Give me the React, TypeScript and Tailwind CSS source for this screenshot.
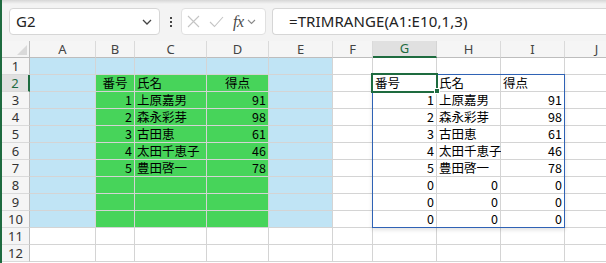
import React from "react";

const COLS = ["A", "B", "C", "D", "E", "F", "G", "H", "I", "J"];

type Cell = { t?: string; a?: "l" | "r" | "c"; bg?: string };

const BLUE = "bg-[#c0e4f5]";
const GREEN = "bg-[#47d45a]";

function buildRows(): Cell[][] {
  const rows: Cell[][] = [];
  const names = ["上原嘉男", "森永彩芽", "古田恵", "太田千恵子", "豊田啓一"];
  const scores = ["91", "98", "61", "46", "78"];
  for (let r = 1; r <= 12; r++) {
    const row: Cell[] = COLS.map(() => ({}));
    if (r <= 10) {
      for (let c = 0; c < 5; c++) row[c].bg = BLUE;
    }
    if (r >= 2 && r <= 10) {
      for (let c = 1; c < 4; c++) row[c].bg = GREEN;
    }
    if (r === 2) {
      row[1] = { ...row[1], t: "番号", a: "c" };
      row[2] = { ...row[2], t: "氏名", a: "l" };
      row[3] = { ...row[3], t: "得点", a: "c" };
      row[6] = { t: "番号", a: "l" };
      row[7] = { t: "氏名", a: "l" };
      row[8] = { t: "得点", a: "l" };
    } else if (r >= 3 && r <= 7) {
      const i = r - 3;
      row[1] = { ...row[1], t: String(i + 1), a: "r" };
      row[2] = { ...row[2], t: names[i], a: "l" };
      row[3] = { ...row[3], t: scores[i], a: "r" };
      row[6] = { t: String(i + 1), a: "r" };
      row[7] = { t: names[i], a: "l" };
      row[8] = { t: scores[i], a: "r" };
    } else if (r >= 8 && r <= 10) {
      row[6] = { t: "0", a: "r" };
      row[7] = { t: "0", a: "r" };
      row[8] = { t: "0", a: "r" };
    }
    rows.push(row);
  }
  return rows;
}

const GRID =
  "grid grid-cols-[28px_66px_39px_72px_62px_64px_40px_64px_64px_64px_64px]";

export default function App() {
  const rows = buildRows();
  return (
    <div className="w-[606px] h-[263px] overflow-hidden border-l-2 border-[#1e6b3f] bg-white font-['Noto_Sans',sans-serif]">
      {/* formula bar area */}
      <div className="h-[41px] bg-[#f3f3f3] relative">
        <div className="h-[4px] bg-gradient-to-b from-[#d6d6d6] to-[#f3f3f3]" />
        <div className="flex items-start pt-[4px] pl-[7px]">
          <div className="w-[151px] h-[27px] bg-white border border-[#d6d6d6] rounded-[4px] flex items-center pl-[6px] pr-[6px] justify-between">
            <span className="text-[15px] text-[#222] leading-none">G2</span>
            <svg width="10" height="6" viewBox="0 0 10 6" className="mr-[1px]">
              <path d="M1 1l4 4 4-4" stroke="#444" strokeWidth="1.3" fill="none" />
            </svg>
          </div>
          <div className="w-[21px] h-[27px] flex flex-col items-center justify-center gap-[2px]">
            <div className="w-[2px] h-[2px] bg-[#444]" />
            <div className="w-[2px] h-[2px] bg-[#444]" />
            <div className="w-[2px] h-[2px] bg-[#444]" />
          </div>
          <div className="w-[85px] h-[27px] bg-white border border-[#e0e0e0] rounded-[4px] flex items-center pl-[5px] gap-[9px]">
            <svg width="13" height="13" viewBox="0 0 13 13">
              <path d="M1 1l11 11M12 1L1 12" stroke="#c4c4c4" strokeWidth="1.1" fill="none" />
            </svg>
            <svg width="15" height="12" viewBox="0 0 15 12">
              <path d="M1 6l4.5 4.5L14 1" stroke="#c4c4c4" strokeWidth="1.1" fill="none" />
            </svg>
            <div className="flex items-center gap-[3px]">
              <span className="font-['Liberation_Serif',serif] italic text-[16px] leading-none text-[#4a4a4a] tracking-[-0.5px]">
                fx
              </span>
              <svg width="9" height="6" viewBox="0 0 9 6">
                <path d="M1 1l3.5 3.5L8 1" stroke="#8a8a8a" strokeWidth="1.1" fill="none" />
              </svg>
            </div>
          </div>
          <div className="ml-[6px] flex-1 h-[27px] bg-white border border-[#d6d6d6] rounded-l-[4px] border-r-0 flex items-center pl-[16px]">
            <span className="text-[15px] text-[#222] leading-none tracking-[0.1px]">
              =TRIMRANGE(A1:E10,1,3)
            </span>
          </div>
        </div>
      </div>

      {/* sheet grid */}
      <div className="relative">
        {/* column headers */}
        <div className={`${GRID} h-[17px] bg-[#f5f5f5]`}>
          <div className="border-r border-b border-[#bdbdbd] relative">
            <svg width="10" height="10" viewBox="0 0 10 10" className="absolute right-[2px] bottom-[2px]">
              <path d="M10 0L10 10L0 10Z" fill="#d9d9d9" />
            </svg>
          </div>
          {COLS.map((c, i) => (
            <div
              key={c}
              className={
                i === 6
                  ? "bg-[#e0e0e0] border-r border-[#d4d4d4] border-b-2 border-b-[#1e6b3f] flex items-center justify-center text-[13px] text-[#1e6b3f] leading-none"
                  : "border-r border-[#dadada] border-b border-b-[#bdbdbd] flex items-center justify-center text-[13px] text-[#444] leading-none"
              }
            >
              {c}
            </div>
          ))}
        </div>

        {rows.map((row, ri) => (
          <div key={ri} className={`${GRID} h-[17px]`}>
            <div
              className={
                ri === 1
                  ? "bg-[#e0e0e0] border-r-2 border-[#1e6b3f] border-b border-b-[#dadada] flex items-center justify-center text-[13px] text-[#1e6b3f] leading-none"
                  : "bg-[#f5f5f5] border-r border-[#bdbdbd] border-b border-b-[#dadada] flex items-center justify-center text-[13px] text-[#333] leading-none"
              }
            >
              {ri + 1}
            </div>
            {row.map((cell, ci) => (
              <div
                key={ci}
                className={`${cell.bg ?? "bg-white"} border-r border-b border-[#d4d4d4] whitespace-nowrap flex items-end px-[2px] text-[12.5px] leading-[16px] text-black font-['Noto_Sans_CJK_JP',sans-serif] ${
                  cell.a === "r" ? "justify-end" : cell.a === "c" ? "justify-center" : "justify-start"
                }`}
              >
                {cell.t ?? ""}
              </div>
            ))}
          </div>
        ))}

        {/* spill range border */}
        <div className="absolute left-[370px] top-[33px] w-[193px] h-[154px] border border-[#2f62b5] shadow-[0_2px_4px_rgba(0,0,0,0.12)] pointer-events-none" />
        {/* active cell G2 */}
        <div className="absolute left-[369px] top-[32px] w-[67px] h-[20px] border-2 border-[#1e6b3f] pointer-events-none" />
        <div className="absolute left-[432px] top-[47px] w-[6px] h-[6px] bg-[#1e6b3f] border border-white pointer-events-none" />
      </div>
    </div>
  );
}
